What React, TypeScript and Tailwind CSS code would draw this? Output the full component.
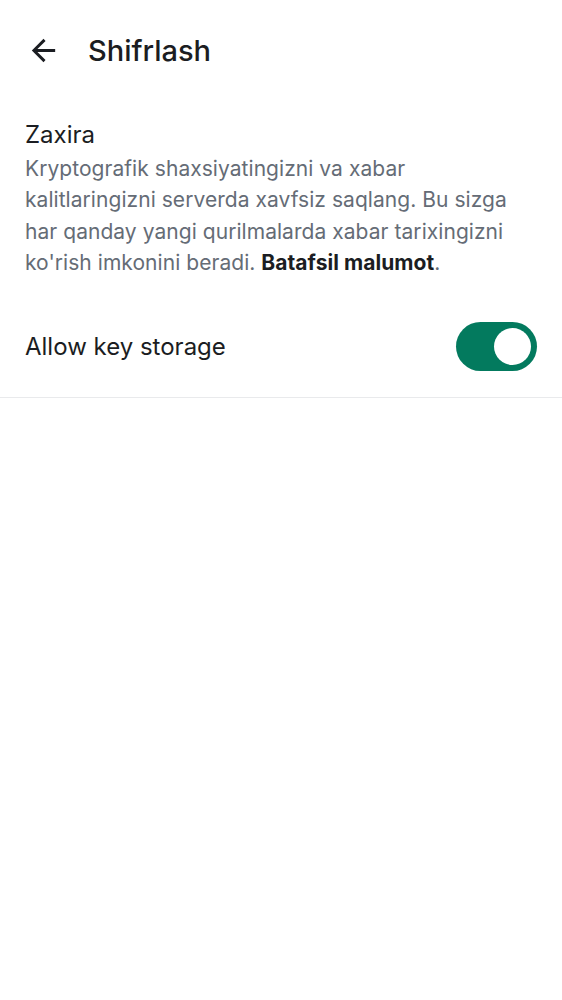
export default function App() {
  return (
    <div className="min-h-screen w-full bg-white text-[#1b1d22]" style={{ fontFamily: 'Inter, Roboto, sans-serif' }}>
      <header className="flex h-[100px] items-center pl-[26px]">
        <button className="flex h-[35px] w-[35px] items-center justify-center" aria-label="Back">
          <svg viewBox="0 0 24 24" className="h-[35px] w-[35px]" fill="#1b1d22">
            <path d="M20 11H7.83l5.59-5.59L12 4l-8 8 8 8 1.41-1.41L7.83 13H20v-2z" />
          </svg>
        </button>
        <h1 className="ml-[27px] text-[29px] font-medium leading-none">Shifrlash</h1>
      </header>

      <section className="px-[25px] pt-[20px]">
        <h2 className="text-[24px] leading-[30px]">Zaxira</h2>
        <p className="mt-[3px] text-[21px] leading-[31.3px] tracking-[0.05px] text-[#656c76]">
          Kryptografik shaxsiyatingizni va xabar kalitlaringizni serverda xavfsiz saqlang. Bu sizga har qanday yangi
          qurilmalarda xabar tarixingizni ko'rish imkonini beradi. <b className="font-bold text-[#1b1d22]">Batafsil malumot</b>.
        </p>
      </section>

      <div className="mt-[44px] flex items-center justify-between border-b border-[#e9eaec] pb-[26px] pl-[25px] pr-[25px]">
        <span className="text-[24px] leading-[30px]">Allow key storage</span>
        <div className="flex h-[49px] w-[81px] items-center justify-end rounded-full bg-[#037a5e] pr-[6px]">
          <div className="h-[37px] w-[37px] rounded-full bg-white" />
        </div>
      </div>
    </div>
  )
}
